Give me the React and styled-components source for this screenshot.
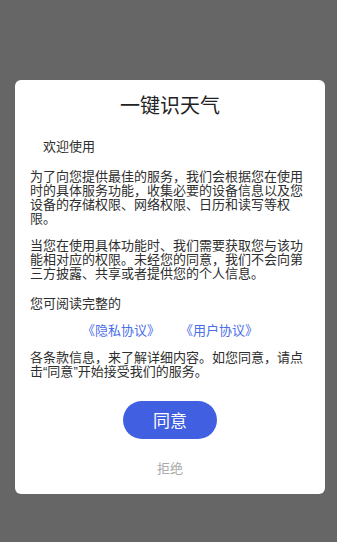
import React from "react";
import styled, { createGlobalStyle } from "styled-components";

const Global = createGlobalStyle`
  html, body { margin: 0; padding: 0; }
  body {
    background: #666666;
    font-family: "Noto Sans CJK SC", "Noto Sans", sans-serif;
  }
`;

const Overlay = styled.div`
  width: 337px;
  height: 542px;
  box-sizing: border-box;
  padding: 80px 12px 0 15px;
  background: #666666;
`;

const Card = styled.div`
  width: 310px;
  box-sizing: border-box;
  background: #ffffff;
  border-radius: 6px;
  padding: 12px 15px 19px;
  display: flex;
  flex-direction: column;
`;

const Title = styled.h1`
  margin: 0;
  font-size: 20px;
  line-height: 26px;
  font-weight: 400;
  color: #222;
  text-align: center;
`;

const Text = styled.p`
  margin: ${(p) => p.$mt || 0}px 0 0;
  font-size: 13px;
  line-height: 14px;
  color: #2e2e2e;
  text-indent: ${(p) => (p.$indent ? "1em" : "0")};
`;

const Quote = styled.span`
  font-family: "Liberation Sans", "Noto Sans", sans-serif;
`;

const Links = styled.div`
  margin-top: 13px;
  display: flex;
  justify-content: center;
  gap: 20px;
  font-size: 13px;
  line-height: 14px;
`;

const Link = styled.a`
  color: #4a6ee8;
  text-decoration: none;
  cursor: pointer;
`;

const AgreeButton = styled.button`
  align-self: center;
  margin-top: 22px;
  width: 94px;
  height: 38px;
  border: none;
  border-radius: 19px;
  background: #4160e1;
  color: #fff;
  font-family: inherit;
  font-size: 17px;
  line-height: 38px;
  padding: 0;
  cursor: pointer;
`;

const RefuseButton = styled.button`
  align-self: center;
  margin-top: 22px;
  border: none;
  background: transparent;
  color: #aaaaaa;
  font-family: inherit;
  font-size: 13px;
  line-height: 14px;
  padding: 0;
  cursor: pointer;
`;

export default function App() {
  return (
    <>
      <Global />
      <Overlay>
        <Card>
          <Title>一键识天气</Title>
          <Text $mt={21} $indent>欢迎使用</Text>
          <Text $mt={16}>
            为了向您提供最佳的服务，我们会根据您在使用时的具体服务功能，收集必要的设备信息以及您设备的存储权限、网络权限、日历和读写等权限。
          </Text>
          <Text $mt={13}>
            当您在使用具体功能时、我们需要获取您与该功能相对应的权限。未经您的同意，我们不会向第三方披露、共享或者提供您的个人信息。
          </Text>
          <Text $mt={16}>您可阅读完整的</Text>
          <Links>
            <Link>《隐私协议》</Link>
            <Link>《用户协议》</Link>
          </Links>
          <Text $mt={13}>
            各条款信息，来了解详细内容。如您同意，请点击<Quote>“</Quote>同意<Quote>”</Quote>开始接受我们的服务。
          </Text>
          <AgreeButton>同意</AgreeButton>
          <RefuseButton>拒绝</RefuseButton>
        </Card>
      </Overlay>
    </>
  );
}
